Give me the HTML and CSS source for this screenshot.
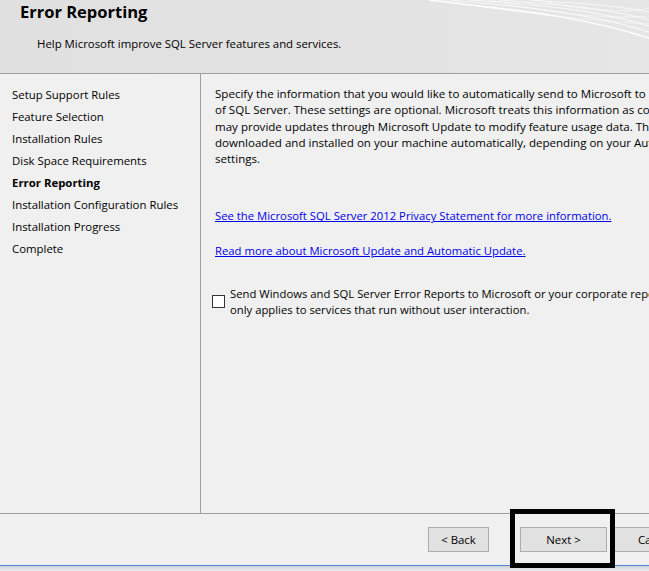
FILE: index.html
```html
<!DOCTYPE html>
<html>
<head>
<meta charset="utf-8">
<link rel="stylesheet" href="styles.css">
</head>
<body>
<div class="window">
  <header class="head">
    <h1 class="title">Error Reporting</h1>
    <p class="subtitle">Help Microsoft improve SQL Server features and services.</p>
    <svg class="waves" width="220" height="40" viewBox="0 0 220 40">
      <path d="M0 0 C60 8 140 12 220 38" stroke="#fff" stroke-width="1.4" fill="none" opacity="0.95"/>
      <path d="M20 0 C80 6 150 10 220 32" stroke="#fff" stroke-width="1" fill="none" opacity="0.8"/>
      <path d="M40 0 C100 4 160 8 220 26" stroke="#fff" stroke-width="1" fill="none" opacity="0.8"/>
      <path d="M70 0 C120 4 170 6 220 20" stroke="#fff" stroke-width="1" fill="none" opacity="0.7"/>
      <path d="M100 0 C140 3 180 4 220 12" stroke="#fff" stroke-width="1" fill="none" opacity="0.7"/>
      <path d="M10 0 C90 14 160 20 220 24" stroke="#fff" stroke-width="0.8" fill="none" opacity="0.6"/>
      <path d="M60 0 C120 12 170 20 220 16" stroke="#fff" stroke-width="0.8" fill="none" opacity="0.6"/>
      <path d="M110 0 C150 10 190 14 220 8" stroke="#fff" stroke-width="0.8" fill="none" opacity="0.6"/>
    </svg>
  </header>
  <div class="main">
    <nav class="steps">
      <div class="step">Setup Support Rules</div>
      <div class="step">Feature Selection</div>
      <div class="step">Installation Rules</div>
      <div class="step">Disk Space Requirements</div>
      <div class="step current">Error Reporting</div>
      <div class="step">Installation Configuration Rules</div>
      <div class="step">Installation Progress</div>
      <div class="step">Complete</div>
    </nav>
    <section class="content">
      <p class="intro">Specify the information that you would like to automatically send to Microsoft to improve future releases<br>of SQL Server. These settings are optional. Microsoft treats this information as confidential. Microsoft<br>may provide updates through Microsoft Update to modify feature usage data. These updates might be<br>downloaded and installed on your machine automatically, depending on your Automatic Update<br>settings.</p>
      <a class="link first" href="#">See the Microsoft SQL Server 2012 Privacy Statement for more information.</a>
      <a class="link" href="#">Read more about Microsoft Update and Automatic Update.</a>
      <label class="check">
        <span class="box"></span>
        <span class="check-text">Send Windows and SQL Server Error Reports to Microsoft or your corporate report server. This setting<br>only applies to services that run without user interaction.</span>
      </label>
    </section>
  </div>
  <footer class="foot">
    <button class="btn back">&lt; Back</button>
    <button class="btn next">Next &gt;</button>
    <button class="btn cancel">Cancel</button>
    <div class="highlight"></div>
  </footer>
  <div class="edge"></div>
</div>
</body>
</html>
```
FILE: styles.css
```css
html, body {
  margin: 0;
  padding: 0;
  background: #f0f0f0;
}
body {
  font-family: "Open Sans", "Noto Sans", sans-serif;
  font-size: 11.4px;
  color: #000;
  overflow: hidden;
  width: 649px;
  height: 571px;
}
.window {
  width: 649px;
  height: 571px;
  display: flex;
  flex-direction: column;
  overflow: hidden;
}
.head {
  position: relative;
  height: 73px;
  flex: none;
  background: linear-gradient(90deg, #e0e0e0 0%, #e3e3e3 60%, #e6e6e6 100%);
  border-bottom: 1px solid #a0a0a0;
  overflow: hidden;
}
.title {
  margin: 0;
  position: relative;
  padding: 1px 0 0 20px;
  font-size: 16.5px;
  font-weight: 700;
  line-height: 22px;
  color: #000;
  z-index: 1;
}
.subtitle {
  margin: 0;
  padding: 13px 0 0 37px;
  line-height: 16px;
  position: relative;
  z-index: 1;
}
.waves {
  position: absolute;
  right: 0;
  top: 0;
}
.main {
  display: flex;
  height: 439px;
  flex: none;
  border-bottom: 1px solid #a0a0a0;
}
.steps {
  width: 201px;
  flex: none;
  border-right: 1px solid #a0a0a0;
  padding-top: 13px;
  padding-left: 12px;
  box-sizing: border-box;
}
.step {
  height: 22px;
  line-height: 16px;
  white-space: nowrap;
}
.step.current {
  font-weight: 700;
}
.content {
  flex: 1;
  padding: 12px 0 0 14px;
  white-space: nowrap;
  overflow: hidden;
  font-size: 11.3px;
}
.intro {
  margin: 0;
  line-height: 16.3px;
  font-size: 11.55px;
}
.link {
  display: block;
  color: #0000e6;
  text-decoration: underline;
  line-height: 16px;
}
.link.first {
  margin-top: 41px;
}
.link + .link {
  margin-top: 19px;
}
.check {
  display: flex;
  align-items: flex-start;
  margin-top: 27px;
  margin-left: -3px;
}
.box {
  width: 11px;
  height: 11px;
  border: 1px solid #333;
  background: #fff;
  flex: none;
  margin-right: 5px;
  margin-top: 9px;
}
.check-text {
  line-height: 16px;
}
.foot {
  position: relative;
  height: 51px;
  flex: none;
  display: flex;
  align-items: flex-start;
  padding-left: 428px;
  padding-top: 13px;
  box-sizing: border-box;
}
.btn {
  font-family: inherit;
  font-size: 11.4px;
  height: 25px;
  background: #e1e1e1;
  border: 1px solid #adadad;
  color: #000;
  padding: 0;
  flex: none;
}
.back {
  width: 61px;
}
.next {
  width: 87px;
  margin-left: 31px;
}
.cancel {
  width: 87px;
  margin-left: 5px;
}
.highlight {
  position: absolute;
  left: 510px;
  top: -5px;
  width: 105px;
  height: 59px;
  border: 5px solid #000;
  box-sizing: border-box;
}
.edge {
  height: 6px;
  flex: none;
  border-top: 1px solid #4a8ad4;
  background: linear-gradient(#cfd3d8, #eceef0);
  box-sizing: border-box;
}
```
